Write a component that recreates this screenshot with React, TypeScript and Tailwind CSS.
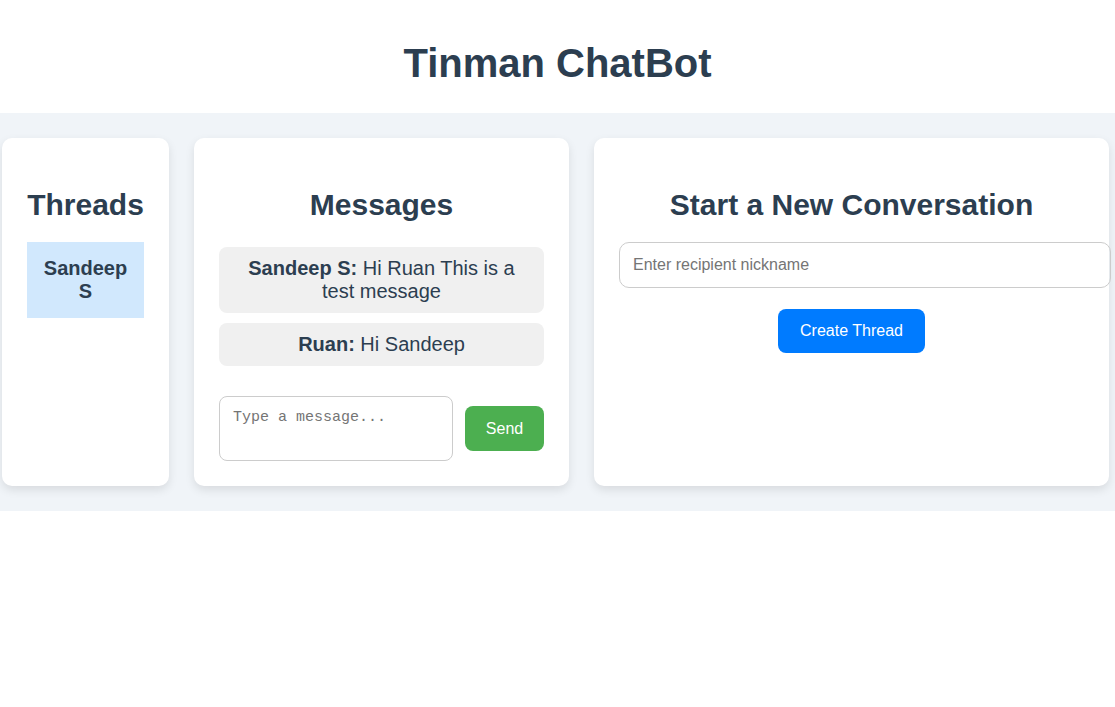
import { useState } from "react";

type Message = {
  id: number;
  sender: string;
  text: string;
};

const messages: Message[] = [
  { id: 1, sender: "Sandeep S", text: "Hi Ruan This is a test message" },
  { id: 2, sender: "Ruan", text: "Hi Sandeep" },
];

const threads = ["Sandeep S"];

export default function App() {
  const [draft, setDraft] = useState("");
  const [nickname, setNickname] = useState("");

  return (
    <div className="min-h-screen bg-white text-[#2c3e50] font-['Liberation_Sans',Arial,sans-serif]">
      {/* Header */}
      <header className="h-[113px] pt-[40px] text-center">
        <h1 className="text-[40px] leading-[46px] font-bold">Tinman ChatBot</h1>
      </header>

      {/* Main area */}
      <main className="flex items-stretch gap-[25px] overflow-hidden bg-[#f0f4f8] py-[25px] pl-[2px]">
        {/* Threads */}
        <section className="w-[167px] shrink-0 rounded-[10px] bg-white p-[25px] shadow-[0_4px_10px_rgba(0,0,0,0.1)]">
          <h2 className="mt-[26px] mb-[21px] text-center text-[30px] leading-[32px] font-bold">
            Threads
          </h2>
          <ul>
            {threads.map((t) => (
              <li
                key={t}
                className="bg-[#d1e8fd] p-[15px] text-center text-[20px] leading-[23px] font-bold"
              >
                {t}
              </li>
            ))}
          </ul>
        </section>

        {/* Messages */}
        <section className="h-[348px] w-[375px] shrink-0 rounded-[10px] bg-white p-[25px] shadow-[0_4px_10px_rgba(0,0,0,0.1)]">
          <h2 className="mt-[26px] mb-[26px] text-center text-[30px] leading-[32px] font-bold">
            Messages
          </h2>
          <div className="flex flex-col gap-[10px]">
            {messages.map((m) => (
              <p
                key={m.id}
                className="rounded-[8px] bg-[#f0f0f0] px-[15px] py-[10px] text-center text-[20px] leading-[23px]"
              >
                <strong>{m.sender}:</strong>
                {" " + m.text}
              </p>
            ))}
          </div>
          <div className="mt-[30px] flex items-center gap-[12px]">
            <textarea
              value={draft}
              onChange={(e) => setDraft(e.target.value)}
              placeholder="Type a message..."
              className="h-[65px] w-[234px] resize-none rounded-[8px] border border-[#cccccc] px-[13px] pt-[12px] pb-[8px] font-['Liberation_Mono',monospace] text-[15px] leading-[18px] placeholder:text-[#757575] focus:outline-none"
            />
            <button
              type="button"
              className="h-[45px] w-[79px] rounded-[8px] bg-[#4caf50] text-[16px] text-white"
            >
              Send
            </button>
          </div>
        </section>

        {/* New conversation */}
        <section className="w-[515px] shrink-0 rounded-[10px] bg-white p-[25px] shadow-[0_4px_10px_rgba(0,0,0,0.1)]">
          <h2 className="mt-[26px] mb-[21px] text-center text-[30px] leading-[32px] font-bold">
            Start a New Conversation
          </h2>
          <input
            type="text"
            value={nickname}
            onChange={(e) => setNickname(e.target.value)}
            placeholder="Enter recipient nickname"
            className="block h-[46px] w-[492px] rounded-[10px] border border-[#cccccc] px-[13px] text-[16px] placeholder:text-[#757575] focus:outline-none"
          />
          <div className="mt-[21px] flex justify-center">
            <button
              type="button"
              className="h-[44px] w-[147px] rounded-[8px] bg-[#007bff] text-[16px] text-white"
            >
              Create Thread
            </button>
          </div>
        </section>
      </main>
    </div>
  );
}
